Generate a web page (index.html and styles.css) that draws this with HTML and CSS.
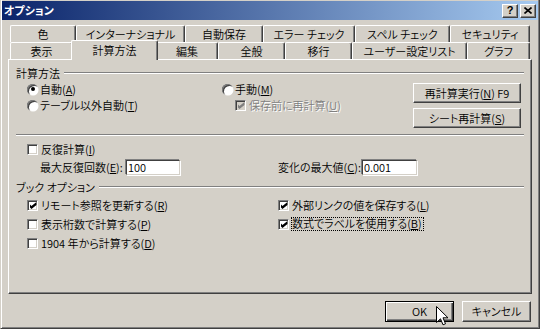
FILE: index.html
```html
<!DOCTYPE html>
<html lang="ja">
<head>
    <meta charset="UTF-8">
    <title>オプション</title>
    <link rel="stylesheet" href="styles.css">
</head>
<body>

    <div class="window">

        <!-- Title bar -->
        <div class="titlebar">
            <span class="title">オプション</span>
            <span class="caption-btn help">?</span>
            <span class="caption-btn">
                <svg width="8" height="7" viewBox="0 0 8 7"><path d="M0.5 0.5 L7.5 6.5 M7.5 0.5 L0.5 6.5" stroke="#000" stroke-width="1.6"/></svg>
            </span>
        </div>

        <div class="dialog">

            <!-- Tabs -->
            <div class="tabs">
                <div class="tab-row row-back">
                    <div class="tab">色</div>
                    <div class="tab">インターナショナル</div>
                    <div class="tab">自動保存</div>
                    <div class="tab">エラー チェック</div>
                    <div class="tab">スペル チェック</div>
                    <div class="tab">セキュリティ</div>
                </div>
                <div class="tab-row row-front">
                    <div class="tab">表示</div>
                    <div class="tab active">計算方法</div>
                    <div class="tab">編集</div>
                    <div class="tab">全般</div>
                    <div class="tab">移行</div>
                    <div class="tab">ユーザー設定リスト</div>
                    <div class="tab">グラフ</div>
                </div>
            </div>

            <!-- Tab page -->
            <div class="panel">

                <div class="group-head">計算方法</div>
                <div class="calc-body">
                    <div class="calc-options">
                        <div class="opt"><span class="radio on"></span>自動(<u>A</u>)</div>
                        <div class="opt"><span class="radio"></span>手動(<u>M</u>)</div>
                        <div class="opt"><span class="radio"></span>テーブル以外自動(<u>T</u>)</div>
                        <div class="opt disabled indent"><span class="check on"></span>保存前に再計算(<u>U</u>)</div>
                    </div>
                    <div class="calc-buttons">
                        <button class="btn">再計算実行(<u>N</u>) F9</button>
                        <button class="btn">シート再計算(<u>S</u>)</button>
                    </div>
                </div>

                <div class="separator"></div>

                <div class="opt iter-row"><span class="check"></span>反復計算(<u>I</u>)</div>
                <div class="field-row">
                    <div class="field first">
                        <label class="field-label">最大反復回数(<u>E</u>):</label>
                        <input class="textbox short" type="text" value="100">
                    </div>
                    <div class="field">
                        <label class="field-label second">変化の最大値(<u>C</u>):</label>
                        <input class="textbox" type="text" value="0.001">
                    </div>
                </div>

                <div class="group-head book-head">ブック オプション</div>
                <div class="book-options">
                    <div class="opt"><span class="check on"></span>リモート参照を更新する(<u>R</u>)</div>
                    <div class="opt right"><span class="check on"></span>外部リンクの値を保存する(<u>L</u>)</div>
                    <div class="opt"><span class="check"></span>表示桁数で計算する(<u>P</u>)</div>
                    <div class="opt right"><span class="check on"></span><span class="focus">数式でラベルを使用する(<u>B</u>)</span></div>
                    <div class="opt"><span class="check"></span>1904 年から計算する(<u>D</u>)</div>
                </div>

            </div>

            <!-- Dialog buttons -->
            <div class="footer">
                <button class="btn default">OK</button>
                <button class="btn">キャンセル</button>
            </div>
        </div>

        <svg class="cursor" width="13" height="20" viewBox="0 0 13 20">
            <path d="M0.5 0.5 L0.5 16.5 L4.5 12.8 L7 18.8 L9.5 17.8 L7 11.8 L12 11.8 Z" fill="#fff" stroke="#000" stroke-width="1"/>
        </svg>
    </div>

</body>
</html>
```

FILE: styles.css
```css
* {
    margin: 0;
    padding: 0;
    box-sizing: border-box;
}

body {
    width: 540px;
    height: 329px;
    overflow: hidden;
    background-color: #d4d0c8;
    font-family: "Noto Sans CJK JP", sans-serif;
    font-size: 11px;
    font-weight: 350;
    font-feature-settings: "palt";
    line-height: 1;
    color: #000;
}

u {
    text-underline-offset: 1px;
}

/* Window frame */
.window {
    position: relative;
    width: 540px;
    height: 329px;
    background-color: #d4d0c8;
    border: 1px solid;
    border-top: none;
    border-color: #d4d0c8 #404040 #404040 #d4d0c8;
    box-shadow: inset 1px 0 #fff, inset -1px -1px #808080;
    padding: 1px 1px 1px 1px;
}

/* Title bar */
.titlebar {
    display: flex;
    align-items: center;
    height: 19px;
    padding: 0 2px 0 2px;
    background: linear-gradient(to right, #0a246a, #a6caf0);
}

.title {
    flex: 1;
    color: #fff;
    font-weight: bold;
    font-size: 11px;
}

.caption-btn {
    display: flex;
    align-items: center;
    justify-content: center;
    width: 16px;
    height: 14px;
    background-color: #d4d0c8;
    border: 1px solid;
    border-color: #fff #404040 #404040 #fff;
    box-shadow: inset -1px -1px #808080;
}

.caption-btn.help {
    margin-right: 2px;
    font-family: "Liberation Sans", sans-serif;
    font-weight: bold;
    font-size: 11px;
}

/* Dialog body */
.dialog {
    padding: 0 6px;
}

.tabs {
    margin: 5px 0 0 2px;
    width: 520px;
}

.tab-row {
    display: grid;
    height: 17px;
}

.row-back {
    grid-template-columns: 66px 109px 78px 92px 95px 80px;
}

.row-front {
    grid-template-columns: 63px 83px 62px 67px 67px 115px 63px;
}

.tab {
    display: flex;
    align-items: center;
    justify-content: center;
    padding-top: 1px;
    background-color: #d4d0c8;
    border-top: 1px solid #fff;
    border-left: 1px solid #fff;
    border-right: 1px solid #404040;
    box-shadow: inset -1px 0 #808080;
    border-radius: 2px 2px 0 0;
    white-space: nowrap;
}

.tab.active {
    position: relative;
    z-index: 1;
    margin: -2px -2px -1px -2px;
    padding-top: 0;
}

/* Tab page */
.panel {
    height: 235px;
    border: 1px solid;
    border-color: #fff #404040 #404040 #fff;
    box-shadow: inset -1px -1px #808080;
    padding: 6px 7px 0 7px;
}

.group-head {
    display: flex;
    align-items: center;
    height: 14px;
    white-space: nowrap;
}

.group-head::after {
    content: "";
    flex: 1;
    margin-left: 4px;
    border-top: 1px solid #808080;
    border-bottom: 1px solid #fff;
}

.calc-body {
    display: flex;
    margin-top: 1px;
}

.calc-options {
    display: grid;
    grid-template-columns: 195px auto;
    grid-template-rows: 16px 16px;
    margin-left: 11px;
}

.calc-buttons {
    display: flex;
    flex-direction: column;
    gap: 5px;
    margin-left: auto;
    margin-right: 3px;
    padding-top: 2px;
}

.calc-buttons .btn {
    width: 108px;
    height: 20px;
}

.separator {
    margin-top: 6px;
    border-top: 1px solid #808080;
    border-bottom: 1px solid #fff;
}

/* Options */
.opt {
    display: flex;
    align-items: center;
    height: 16px;
    white-space: nowrap;
}

.opt.indent {
    margin-left: 13px;
}

.opt.disabled {
    color: #808080;
    text-shadow: 1px 1px #fff;
}

.radio {
    position: relative;
    width: 11px;
    height: 11px;
    margin-right: 2px;
    border-radius: 50%;
    background-color: #fff;
    box-shadow: inset 1px 1px #808080, inset 2px 2px #404040, -0.5px -0.5px 0 #d4d0c8, 0.5px 0.5px 0 #fff;
}

.radio.on::after {
    content: "";
    position: absolute;
    left: 3.5px;
    top: 3.5px;
    width: 4px;
    height: 4px;
    border-radius: 50%;
    background-color: #000;
}

.check {
    display: flex;
    align-items: center;
    justify-content: center;
    width: 11px;
    height: 11px;
    margin-right: 3px;
    background-color: #fff;
    border: 1px solid;
    border-color: #808080 #fff #fff #808080;
    box-shadow: inset 1px 1px #404040, inset -1px -1px #d4d0c8;
}

.check.on::after {
    content: "";
    width: 7px;
    height: 7px;
    margin: 1px 0 0 1px;
    background-color: #000;
    clip-path: polygon(0 28%, 28% 57%, 100% 0, 100% 43%, 28% 100%, 0 71%);
}

.disabled .check {
    background-color: #d4d0c8;
}

.disabled .check.on::after {
    background-color: #808080;
}

.iter-row {
    margin-top: 5px;
    margin-left: 11px;
}

.field-row {
    display: flex;
    height: 16px;
    margin-top: 2px;
    margin-left: 24px;
}

.field {
    display: flex;
    align-items: center;
}

.field.first {
    width: 238px;
}

.field-label {
    width: 86px;
    white-space: nowrap;
}

.field-label.second {
    width: 84px;
}

.textbox {
    width: 55px;
    height: 15px;
    padding: 0 1px;
    font: inherit;
    background-color: #fff;
    border: 1px solid;
    border-color: #404040 #d4d0c8 #d4d0c8 #404040;
    box-shadow: -1px -1px 0 #808080, 1px 1px 0 #fff;
    outline: none;
}

.textbox.short {
    width: 54px;
}

.book-head {
    margin-top: 5px;
}

.book-options {
    display: grid;
    grid-template-columns: 251px auto;
    grid-template-rows: 16px 16px 16px;
    row-gap: 3px;
    margin-top: 3px;
    margin-left: 11px;
}

.focus {
    outline: 1px dotted #000;
    outline-offset: 0;
    padding: 0 1px 1px 0;
}

/* Buttons */
.btn {
    font: inherit;
    font-feature-settings: "palt";
    color: #000;
    background-color: #d4d0c8;
    border: 1px solid;
    border-color: #fff #404040 #404040 #fff;
    box-shadow: inset -1px -1px #808080;
}

.footer {
    display: flex;
    justify-content: flex-end;
    gap: 8px;
    padding-top: 7px;
    padding-right: 1px;
}

.footer .btn {
    width: 69px;
    height: 21px;
}

.btn.default {
    border-color: #000;
    box-shadow: inset 1px 1px #fff, inset -1px -1px #404040, inset -2px -2px #808080;
}

.cursor {
    position: absolute;
    left: 435px;
    top: 306px;
}
```
